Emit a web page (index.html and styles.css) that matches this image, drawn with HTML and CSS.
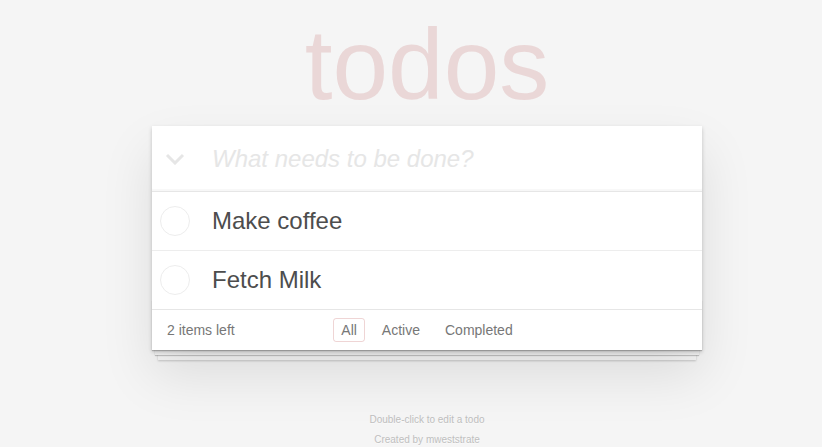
FILE: index.html
```html
<!DOCTYPE html>
<html lang="en">
<head>
<meta charset="utf-8">
<title>MobX • TodoMVC</title>
<link rel="stylesheet" href="styles.css">
</head>
<body>
<div class="page">
  <h1 class="title">todos</h1>
  <section class="todoapp">
    <header class="header">
      <span class="toggle-all">
        <svg width="20" height="12" viewBox="0 0 20 12"><polyline points="2,2 10,10 18,2" fill="none" stroke="#e6e6e6" stroke-width="3"/></svg>
      </span>
      <input class="new-todo" placeholder="What needs to be done?">
    </header>
    <ul class="todo-list">
      <li class="todo"><span class="toggle"></span><label class="todo-label">Make coffee</label></li>
      <li class="todo"><span class="toggle"></span><label class="todo-label">Fetch Milk</label></li>
    </ul>
    <footer class="footer">
      <span class="todo-count">2 items left</span>
      <ul class="filters">
        <li><a class="filter selected">All</a></li>
        <li><a class="filter">Active</a></li>
        <li><a class="filter">Completed</a></li>
      </ul>
      <span></span>
    </footer>
  </section>
  <footer class="info">
    <p>Double-click to edit a todo</p>
    <p>Created by mweststrate</p>
  </footer>
</div>
</body>
</html>
```
FILE: styles.css
```css
html, body {
  margin: 0;
  padding: 0;
}
body {
  background: #f5f5f5;
  font-family: "Liberation Sans", Arial, sans-serif;
  color: #4d4d4d;
  -webkit-font-smoothing: antialiased;
}
.page {
  width: 550px;
  margin: 0 auto;
  padding-left: 32px;
  padding-top: 14px;
}
.title {
  margin: 0 0 12px;
  height: 100px;
  font-size: 100px;
  line-height: 100px;
  font-weight: 400;
  text-align: center;
  color: rgba(175, 47, 47, 0.15);
}
.todoapp {
  position: relative;
  background: #fff;
  box-shadow: 0 2px 4px 0 rgba(0, 0, 0, 0.2), 0 25px 50px 0 rgba(0, 0, 0, 0.1);
}
.header {
  display: flex;
  align-items: center;
  height: 65px;
  box-shadow: inset 0 -2px 1px rgba(0, 0, 0, 0.03);
}
.toggle-all {
  width: 46px;
  display: flex;
  justify-content: center;
  padding-top: 1px;
}
.toggle-all svg {
  display: block;
}
.new-todo {
  flex: 1;
  border: none;
  outline: none;
  margin: 0;
  padding: 0 16px 0 14px;
  height: 65px;
  font-family: inherit;
  font-size: 24px;
  color: #4d4d4d;
  background: transparent;
}
.new-todo::placeholder {
  font-style: italic;
  color: #e6e6e6;
}
.todo-list {
  list-style: none;
  margin: 0;
  padding: 0;
  border-top: 1px solid #e6e6e6;
}
.todo {
  display: flex;
  align-items: center;
  height: 58px;
  border-bottom: 1px solid #ededed;
}
.todo:last-child {
  border-bottom: none;
}
.toggle {
  box-sizing: border-box;
  width: 30px;
  height: 30px;
  margin-left: 8px;
  border: 1px solid #ededed;
  border-radius: 50%;
}
.todo-label {
  padding-left: 22px;
  font-size: 24px;
  line-height: 28px;
  color: #4d4d4d;
}
.footer {
  position: relative;
  display: grid;
  grid-template-columns: 1fr auto 1fr;
  align-items: center;
  height: 20px;
  padding: 8px 15px 12px;
  border-top: 1px solid #e6e6e6;
  color: #777;
  font-size: 14px;
}
.footer::before {
  content: "";
  position: absolute;
  left: 0;
  right: 0;
  bottom: 0;
  height: 50px;
  overflow: hidden;
  z-index: -1;
  box-shadow: 0 1px 1px rgba(0, 0, 0, 0.2),
              0 8px 0 -3px #f6f6f6,
              0 9px 1px -3px rgba(0, 0, 0, 0.2),
              0 16px 0 -6px #f6f6f6,
              0 17px 2px -6px rgba(0, 0, 0, 0.2);
}
.todo-count {
  line-height: 20px;
}
.filters {
  list-style: none;
  margin: 0;
  padding: 0;
  display: flex;
  gap: 3px;
}
.filters li {
  margin: 0 3px;
}
.filter {
  display: block;
  padding: 3px 7px;
  line-height: 16px;
  border: 1px solid transparent;
  border-radius: 3px;
  color: inherit;
}
.filter.selected {
  border-color: rgba(175, 47, 47, 0.2);
}
.info {
  margin: 65px auto 0;
  color: #bfbfbf;
  font-size: 10px;
  text-shadow: 0 1px 0 rgba(255, 255, 255, 0.5);
  text-align: center;
}
.info p {
  margin: 10px 0;
  line-height: 1;
}
```
